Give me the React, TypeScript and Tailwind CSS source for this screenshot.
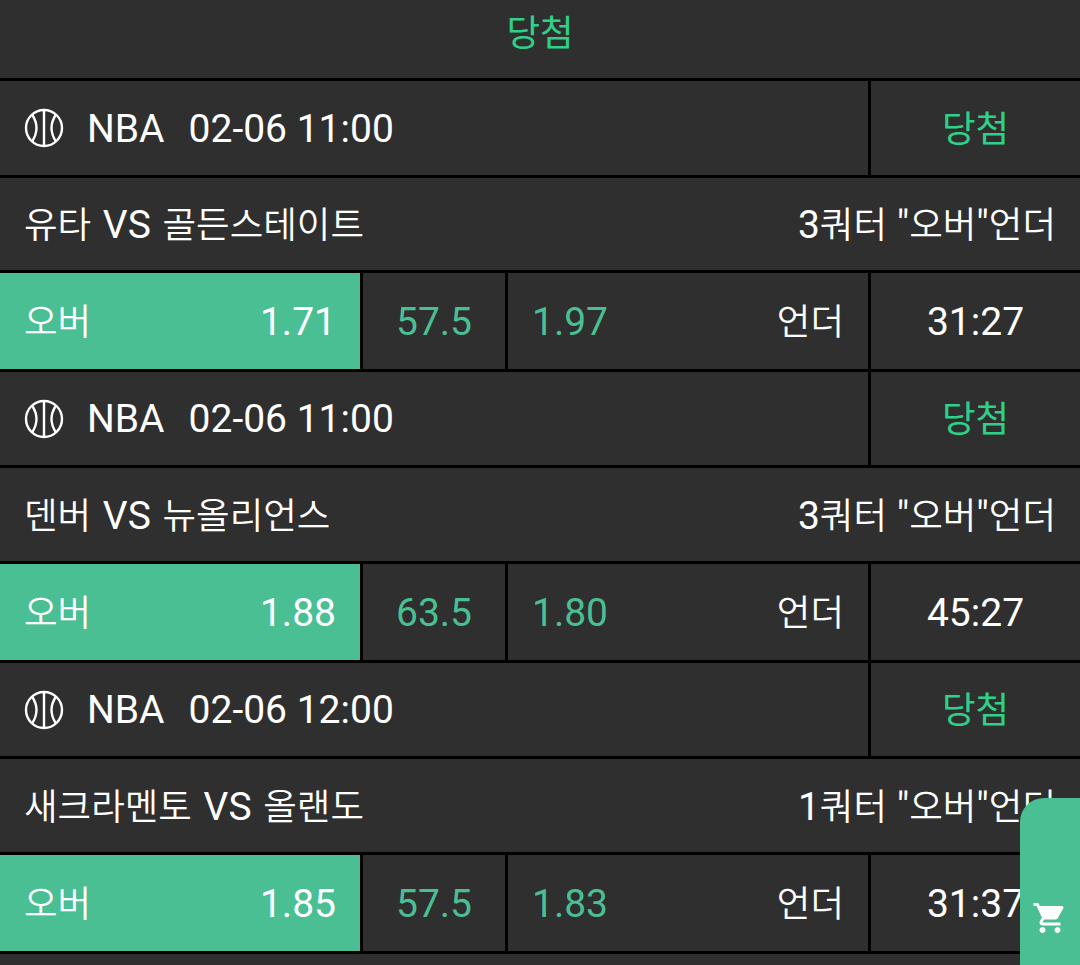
import React from 'react';

type Game = {
  time: string;
  teams: string;
  market: string;
  over: string;
  line: string;
  under: string;
  clock: string;
  heights: [string, string, string];
};

const GAMES: Game[] = [
  { time: '02-06 11:00', teams: '유타 VS 골든스테이트', market: '3쿼터 "오버"언더', over: '1.71', line: '57.5', under: '1.97', clock: '31:27', heights: ['h-[97px]', 'h-[95px]', 'h-[99px]'] },
  { time: '02-06 11:00', teams: '덴버 VS 뉴올리언스', market: '3쿼터 "오버"언더', over: '1.88', line: '63.5', under: '1.80', clock: '45:27', heights: ['h-[96px]', 'h-[96px]', 'h-[99px]'] },
  { time: '02-06 12:00', teams: '새크라멘토 VS 올랜도', market: '1쿼터 "오버"언더', over: '1.85', line: '57.5', under: '1.83', clock: '31:37', heights: ['h-[96px]', 'h-[96px]', 'h-[99px]'] },
];

// hangul runs are set a bit smaller than the latin/digits, like the phone font
const Txt = ({ children, strong }: { children: string; strong?: boolean }) => (
  <span>
    {children.split(/([\uac00-\ud7a3]+)/).map((part, i) =>
      i % 2 === 1 ? (
        <span key={i} className={strong ? 'text-[36.5px] font-normal' : 'text-[36.5px] font-[350]'}>{part}</span>
      ) : (
        part
      )
    )}
  </span>
);

const BallIcon = () => (
  <svg width="40" height="40" viewBox="0 0 40 40" fill="none" stroke="white" strokeWidth="2.4" className="shrink-0">
    <circle cx="20" cy="20" r="18" />
    <path d="M20 2v36" />
    <path d="M8 6.5Q17 20 8 33.5" />
    <path d="M32 6.5Q23 20 32 33.5" />
  </svg>
);

const CartIcon = () => (
  <svg width="36" height="36" viewBox="0 0 24 24" fill="white">
    <path d="M7 18c-1.1 0-1.99.9-1.99 2S5.9 22 7 22s2-.9 2-2-.9-2-2-2zM1 2v2h2l3.6 7.59-1.35 2.45c-.16.28-.25.61-.25.96 0 1.1.9 2 2 2h12v-2H7.42c-.14 0-.25-.11-.25-.25l.03-.12.9-1.63h7.45c.75 0 1.41-.41 1.75-1.03l3.58-6.49c.08-.14.12-.31.12-.48 0-.55-.45-1-1-1H5.21l-.94-2H1zm16 16c-1.1 0-1.99.9-1.99 2s.89 2 1.99 2 2-.9 2-2-.9-2-2-2z" />
  </svg>
);

const GameRows = ({ game }: { game: Game }) => (
  <>
    <div className={`flex border-b-[3px] border-black ${game.heights[0]}`}>
      <div className="flex flex-1 items-center pl-[24px] border-r-[3px] border-black">
        <BallIcon />
        <span className="ml-[23px] pt-[2px]">NBA</span>
        <span className="ml-[24px] pt-[2px]">{game.time}</span>
      </div>
      <div className="flex w-[209px] items-center justify-center pt-[2px] text-[#2fd088]"><Txt strong>당첨</Txt></div>
    </div>
    <div className={`flex items-center justify-between pl-6 pr-[24px] pt-[3px] border-b-[3px] border-black ${game.heights[1]}`}>
      <span className="[word-spacing:2px]"><Txt>{game.teams}</Txt></span>
      <Txt>{game.market}</Txt>
    </div>
    <div className={`flex border-b-[3px] border-black ${game.heights[2]}`}>
      <div className="flex w-[363px] items-center justify-between pl-6 pr-[24px] pt-[2px] bg-[#4abf94] border-r-[3px] border-black">
        <Txt>오버</Txt>
        <span>{game.over}</span>
      </div>
      <div className="flex w-[145px] items-center justify-center pt-[2px] text-[#4abf94] border-r-[3px] border-black">{game.line}</div>
      <div className="flex w-[363px] items-center justify-between pl-6 pr-[24px] pt-[2px] border-r-[3px] border-black">
        <span className="text-[#4abf94]">{game.under}</span>
        <Txt>언더</Txt>
      </div>
      <div className="flex w-[209px] items-center justify-center pt-[2px]">{game.clock}</div>
    </div>
  </>
);

const App: React.FC = () => {
  return (
    <div className="relative h-[965px] w-[1080px] overflow-hidden bg-[#2f2f2f] text-[39px] leading-none text-white font-['Roboto','Noto_Sans_CJK_KR',sans-serif]">
      <div className="flex h-[81px] items-center justify-center pb-[12px] border-b-[3px] border-black text-[#2fd088]"><Txt strong>당첨</Txt></div>
      {GAMES.map((game, i) => (
        <GameRows key={i} game={game} />
      ))}
      <div className="absolute bottom-0 right-0 flex h-[167px] w-[60px] items-end justify-center pb-[29px] rounded-tl-[24px] bg-[#4abf94]">
        <CartIcon />
      </div>
    </div>
  );
};

export default App;
